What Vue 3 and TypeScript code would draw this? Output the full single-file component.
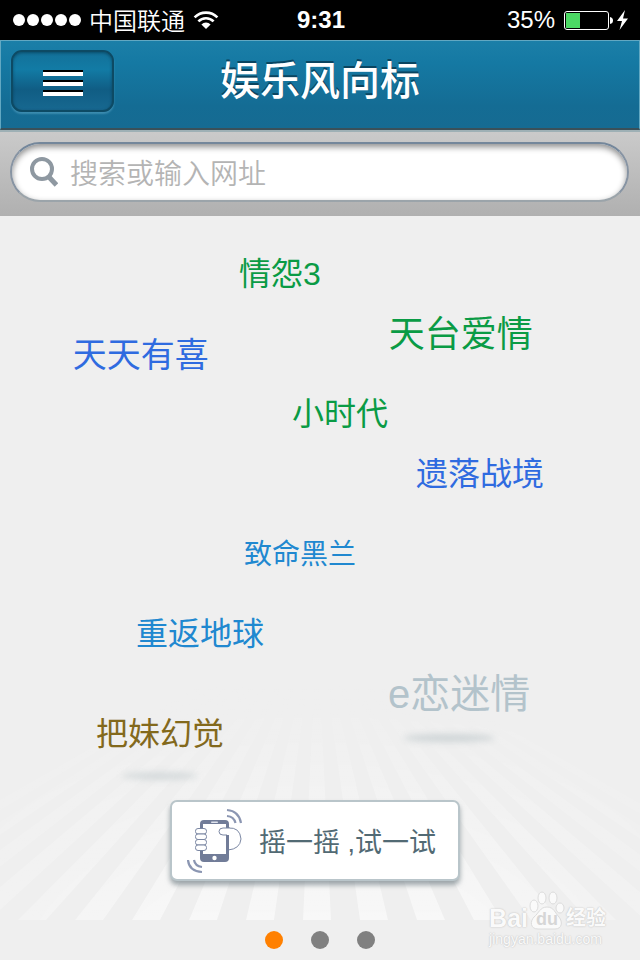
<script setup lang="ts">
interface Topic {
  text: string
  /** horizontal centre, percent of the cloud width */
  x: number
  /** vertical centre in px from the top of the cloud */
  y: number
  size: number
  color: string
}

const topics: Topic[] = [
  { text: '情怨3', x: 43.75, y: 58, size: 32, color: '#0a9b45' },
  { text: '天台爱情', x: 72, y: 119, size: 36, color: '#0a9b45' },
  { text: '天天有喜', x: 22, y: 139, size: 34, color: '#2f6be0' },
  { text: '小时代', x: 53.125, y: 198, size: 32, color: '#0a9b45' },
  { text: '遗落战境', x: 75, y: 258, size: 32, color: '#2f6be0' },
  { text: '致命黑兰', x: 46.875, y: 339, size: 28, color: '#2088d0' },
  { text: '重返地球', x: 31.25, y: 418, size: 32, color: '#2088d0' },
  { text: 'e恋迷情', x: 71.75, y: 478, size: 40, color: '#b3c3cb' },
  { text: '把妹幻觉', x: 25, y: 518, size: 32, color: '#83691c' },
]

const rays = Array.from({ length: 19 }, (_, i) => {
  const centre = 317 + (i - 9) * 57
  return `317,0 ${centre - 14},301 ${centre + 14},301`
})

const pages = [1, 2, 3]
</script>

<template>
  <div class="page">
    <div class="status">
      <div class="status-left">
        <span class="signal"><i v-for="n in 5" :key="n"></i></span>
        <span class="carrier">中国联通</span>
        <svg class="wifi" viewBox="0 0 26 20" width="26" height="20" aria-hidden="true">
          <path d="M1.6 7.4a16 16 0 0 1 22.8 0" />
          <path d="M5.4 11.4a10.6 10.6 0 0 1 15.2 0" />
          <path class="solid" d="M13 19l-4.6-4.6a6.5 6.5 0 0 1 9.2 0z" />
        </svg>
      </div>
      <strong class="time">9:31</strong>
      <div class="status-right">
        <span>35%</span>
        <svg viewBox="0 0 66 24" width="66" height="24" aria-hidden="true">
          <rect x="1.5" y="3.5" width="44" height="18" rx="2.5" fill="none" stroke="#fff" />
          <rect x="3" y="5" width="14" height="15" fill="#4cd964" />
          <path d="M47 9q3 .5 3 3.500t-3 3.500z" fill="#fff" />
          <path d="M62 2l-8 11h5l-2.500 9L65 10.500h-5z" fill="#fff" />
        </svg>
      </div>
    </div>

    <header class="header">
      <button class="menu" type="button" aria-label="菜单">
        <i></i><i></i><i></i>
      </button>
      <h1>娱乐风向标</h1>
    </header>

    <form class="search" @submit.prevent>
      <label class="field">
        <svg viewBox="0 0 28 30" width="28" height="30" aria-hidden="true">
          <circle cx="12" cy="12" r="10" />
          <path d="M18.500 19.500l8 8.500" stroke-width="5" />
        </svg>
        <input type="text" placeholder="搜索或输入网址" aria-label="搜索或输入网址" />
      </label>
    </form>

    <main class="stage">
      <svg class="floor" viewBox="0 0 640 301" preserveAspectRatio="none" aria-hidden="true">
        <defs>
          <linearGradient id="fade" gradientUnits="userSpaceOnUse" x1="0" y1="66" x2="0" y2="301">
            <stop offset="0" stop-color="#fff" stop-opacity="0" />
            <stop offset="1" stop-color="#fff" stop-opacity="0.55" />
          </linearGradient>
          <radialGradient id="spot" gradientUnits="userSpaceOnUse" cx="317" cy="301" r="360">
            <stop offset="0.4" stop-color="#fff" />
            <stop offset="1" stop-color="#fff" stop-opacity="0.25" />
          </radialGradient>
          <mask id="glow"><rect width="640" height="301" fill="url(#spot)" /></mask>
        </defs>
        <g mask="url(#glow)">
          <polygon v-for="(points, i) in rays" :key="i" :points="points" fill="url(#fade)" />
        </g>
      </svg>

      <nav class="cloud">
        <a
          v-for="topic in topics"
          :key="topic.text"
          href="#"
          :style="{ left: topic.x + '%', top: topic.y + 'px', fontSize: topic.size + 'px', color: topic.color }"
          >{{ topic.text }}</a
        >
        <i class="shadow shadow-right"></i>
        <i class="shadow shadow-left"></i>
      </nav>

      <div class="action">
        <button class="shake" type="button">
          <svg viewBox="0 0 58 66" width="58" height="66" fill="none" aria-hidden="true">
            <g stroke="#8b96b2" stroke-width="2.200">
              <path d="M40 2q12 1 14 13" />
              <path d="M40 8q7 .5 8.500 7" />
              <path d="M1 52q1 11 14 12" />
              <path d="M7 52q1 6 8 7" />
            </g>
            <path
              d="M41 20q12-1 13 11-1 10-13 11z"
              fill="#fff"
              stroke="#7b87a3"
            />
            <rect x="13" y="12" width="29" height="42" rx="4" fill="#717c98" />
            <rect x="16" y="16" width="23" height="30" fill="#fff" />
            <rect x="24" y="13.500" width="7" height="1.500" rx="0.700" fill="#dfe3ee" />
            <circle cx="27.500" cy="50" r="2.200" fill="#fff" />
            <path
              d="M43 20h-7q-4 0-4 3.500t4 3.500h4v14h3z"
              fill="#fff"
            />
            <path d="M43 20h-7q-4 0-4 3.500t4 3.500h4" stroke="#7b87a3" />
            <path d="M39 27h3v17h-3z" fill="#717c98" />
            <g fill="#fff" stroke="#7b87a3">
              <rect x="8.500" y="20.500" width="11" height="5.500" rx="2.500" />
              <rect x="8.500" y="26" width="11" height="5.500" rx="2.500" />
              <rect x="8.500" y="31.500" width="11" height="5.500" rx="2.500" />
              <rect x="8.500" y="37" width="11" height="5.500" rx="2.500" />
            </g>
          </svg>
          <span>摇一摇 ,试一试</span>
        </button>
      </div>

      <div class="pager">
        <button
          v-for="page in pages"
          :key="page"
          type="button"
          :class="{ active: page === 1 }"
          :aria-label="'第' + page + '页'"
        ></button>
      </div>

      <div class="watermark">
        <div class="brand">
          <span>Bai</span>
          <span class="paw">
            <svg viewBox="0 0 38 42" width="38" height="42" aria-hidden="true">
              <ellipse cx="6" cy="17" rx="4" ry="6" />
              <ellipse cx="14" cy="9" rx="4" ry="6" />
              <ellipse cx="25" cy="9" rx="4" ry="6" />
              <ellipse cx="32" cy="19" rx="4" ry="5" />
              <path d="M19 18c7 0 8 6 12 10 4 5 3 12-4 12H10c-8 0-8-8-4-12 5-4 6-10 13-10z" />
            </svg>
            <b>du</b>
          </span>
          <span class="word">经验</span>
        </div>
        <div class="site">jingyan.baidu.com</div>
      </div>
    </main>
  </div>
</template>

<style>
body {
  background: #eee;
}
</style>

<style scoped>
.page {
  display: flex;
  flex-direction: column;
  min-height: 100vh;
  background: #efefef;
  font-family: 'Liberation Sans', 'Noto Sans CJK SC', sans-serif;
}

.page *,
.page {
  box-sizing: border-box;
}

button {
  padding: 0;
  border: 0;
  font: inherit;
  cursor: pointer;
}

.status {
  display: grid;
  grid-template-columns: 1fr auto 1fr;
  align-items: center;
  height: 40px;
  padding: 0 11px 0 13px;
  background: #000;
  color: #fff;
  font-size: 24px;
  line-height: 40px;
}

.status-left,
.status-right,
.signal {
  display: flex;
  align-items: center;
}

.status-left {
  gap: 8px;
}

.status-right {
  justify-content: flex-end;
  gap: 8px;
}

.signal {
  gap: 2px;
}

.signal i {
  width: 12px;
  height: 12px;
  border-radius: 50%;
  background: #fff;
}

.carrier {
  font-weight: 350;
  font-family: 'Noto Sans CJK SC', sans-serif;
}

.wifi path {
  fill: none;
  stroke: #fff;
  stroke-width: 2.6;
}

.wifi .solid {
  fill: #fff;
  stroke: none;
}

.header {
  display: grid;
  grid-template-columns: 103px 1fr 103px;
  align-items: start;
  height: 90px;
  padding: 9px 10px 0;
  border: 1px solid #62a8c2;
  border-bottom: 2px solid #3a5059;
  background: linear-gradient(#1b7fa8, #1579a3 25%, #146c94 75%, #166b92);
}

.menu {
  display: flex;
  flex-direction: column;
  align-items: center;
  justify-content: center;
  gap: 4px;
  height: 62px;
  padding-top: 4px;
  border: 2px solid #0d4a64;
  border-radius: 11px;
  background: linear-gradient(#137199, #127ba5 30%, #105d84 65%, #176890);
  box-shadow:
    0 2px 2px rgba(120, 190, 220, 0.4),
    inset 0 1px 3px rgba(0, 40, 60, 0.5);
}

.menu i {
  width: 40px;
  height: 6px;
  border-top: 2px solid #000;
  background: #fff;
}

h1 {
  margin: 0;
  color: #fff;
  font-size: 40px;
  font-weight: 500;
  line-height: 62px;
  text-align: center;
  text-shadow: 0 -2px 0 #0a4560;
}

.search {
  padding: 10px 11px 14px 10px;
  border-top: 2px solid #9eb0b5;
  background: linear-gradient(#cacaca, #b0b0b0);
}

.field {
  display: flex;
  align-items: center;
  gap: 12px;
  height: 60px;
  padding: 0 20px 0 18px;
  border: 2px solid;
  border-color: #74879b #8794a3 #9ba4aa;
  border-radius: 30px;
  background: #fff;
  box-shadow: inset 0 3px 6px rgba(0, 0, 0, 0.45);
}

.field svg {
  flex: none;
  fill: none;
  stroke: #8e98a1;
  stroke-width: 4;
}

.field input {
  flex: 1;
  min-width: 0;
  height: 44px;
  padding: 0;
  border: 0;
  outline: 0;
  background: transparent;
  color: #555;
  font: 350 28px 'Noto Sans CJK SC', sans-serif;
}

.field input::placeholder {
  color: #b4b4b4;
  opacity: 1;
}

.stage {
  position: relative;
  display: flex;
  flex: 1;
  flex-direction: column;
}

.floor {
  position: absolute;
  bottom: 40px;
  left: 0;
  width: 100%;
  height: 301px;
}

.cloud {
  position: relative;
  flex: 1;
  min-height: 584px;
}

.cloud a {
  position: absolute;
  line-height: 1;
  text-decoration: none;
  white-space: nowrap;
  transform: translate(-50%, -50%);
}

.shadow {
  position: absolute;
  height: 8px;
  border-radius: 50%;
  background: #cfd5d7;
  filter: blur(3px);
}

.shadow-right {
  top: 518px;
  left: 63%;
  width: 92px;
}

.shadow-left {
  top: 556px;
  left: 19%;
  width: 76px;
  opacity: 0.8;
}

.action {
  position: relative;
  display: flex;
  justify-content: center;
  padding-right: 10px;
}

.shake {
  display: flex;
  align-items: center;
  gap: 14px;
  width: 290px;
  height: 81px;
  padding-left: 15px;
  border: 2px solid #b9c5ca;
  border-radius: 7px;
  background: #fff;
  box-shadow: 0 4px 5px rgba(100, 115, 122, 0.6);
  color: #526a74;
  font-size: 27px;
  white-space: nowrap;
}

.pager {
  position: relative;
  display: flex;
  align-items: center;
  justify-content: center;
  gap: 28px;
  height: 40px;
  margin-top: 39px;
}

.pager button {
  width: 18px;
  height: 18px;
  border-radius: 50%;
  background: #808080;
}

.pager .active {
  background: #ff8000;
}

.watermark {
  position: absolute;
  right: 34px;
  bottom: 13px;
  color: #fafafa;
  text-shadow:
    0 0 1px #c8c8c8,
    0 0 2px #c8c8c8;
}

.brand {
  display: flex;
  align-items: flex-end;
  font-size: 25px;
  font-weight: 700;
  line-height: 26px;
}

.paw {
  display: grid;
  place-items: end center;
}

.paw svg,
.paw b {
  grid-area: 1 / 1;
}

.paw svg {
  fill: #fafafa;
  stroke: #dcdcdc;
}

.paw b {
  color: #d6d6d6;
  font-size: 18px;
  line-height: 24px;
  text-shadow: none;
}

.word {
  font-size: 20px;
}

.site {
  font-size: 14px;
  line-height: 16px;
}
</style>
